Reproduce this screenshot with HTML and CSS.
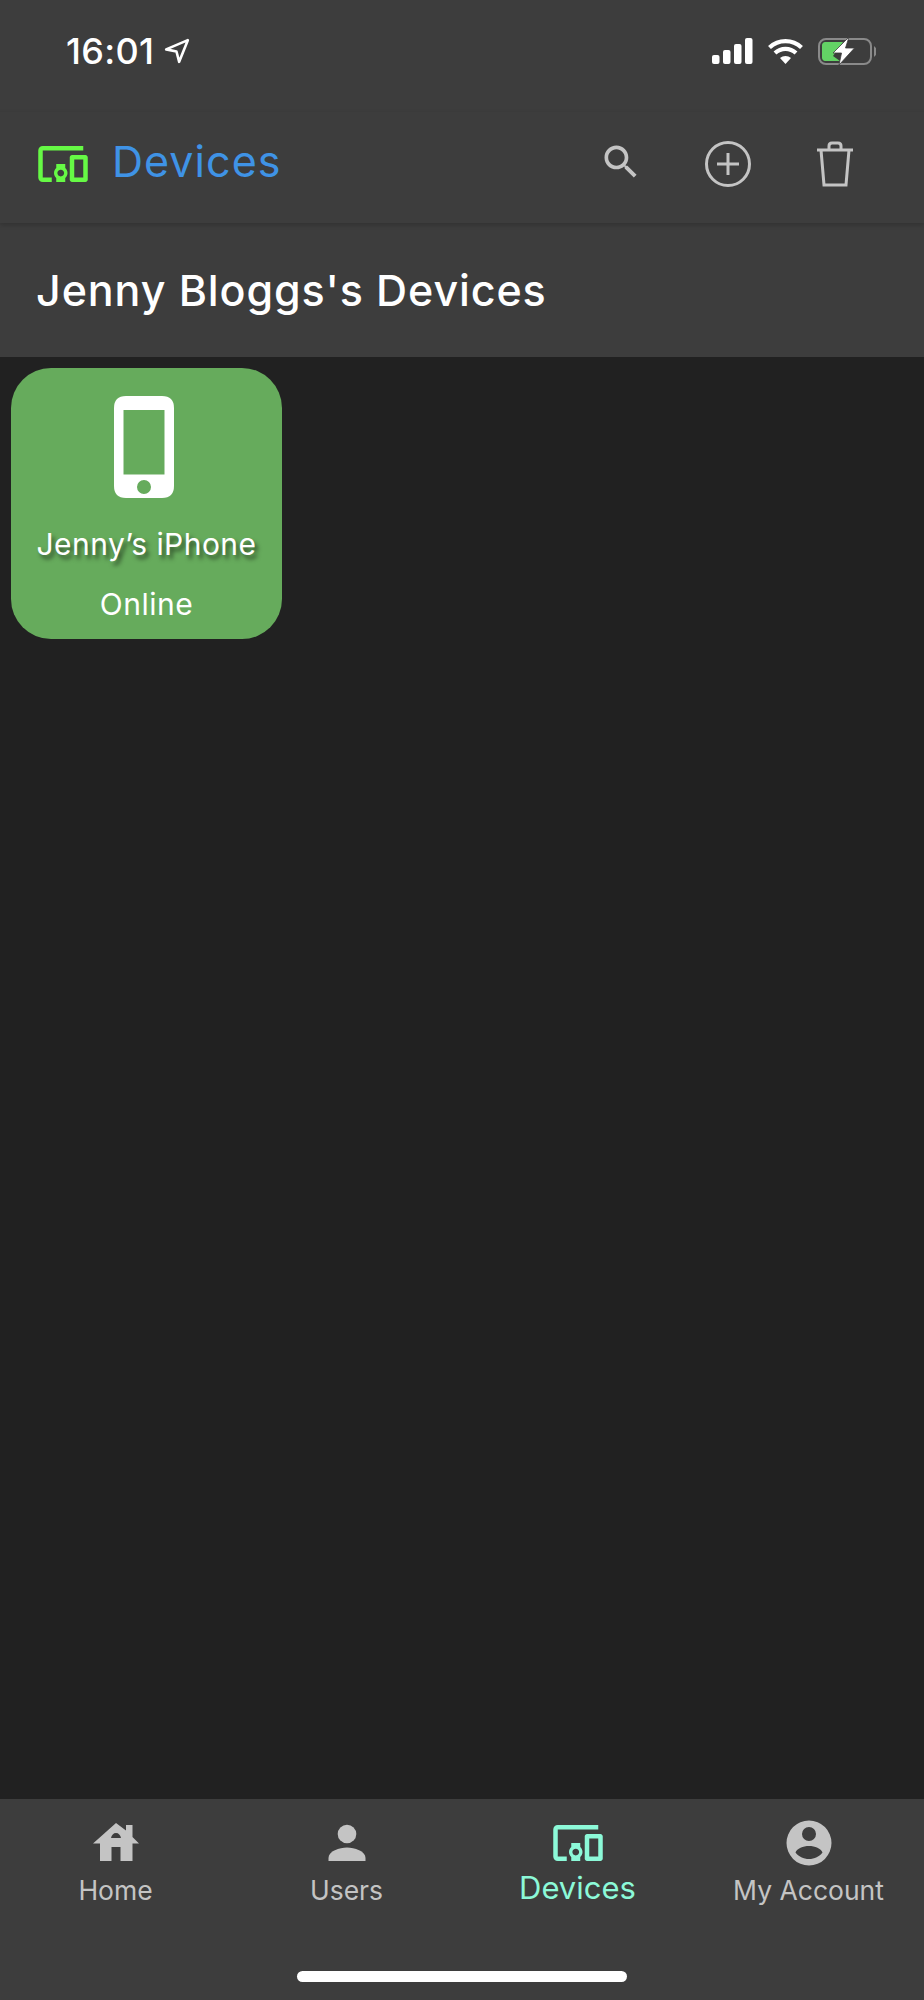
FILE: index.html
```html
<!DOCTYPE html>
<html lang="en">
<head>
    <meta charset="UTF-8">
    <meta name="viewport" content="width=device-width, initial-scale=1.0">
    <title>Devices</title>
    <link rel="stylesheet" href="styles.css">
</head>
<body>
    <div class="app">
        <div class="status-bar">
            <div class="status-left">
                <span class="time">16:01</span>
                <svg class="location" viewBox="0 0 24 24"><path d="M22 2 2 10.5l9.5 2 2.5 9.5z" fill="none" stroke="#fff" stroke-width="2.4" stroke-linejoin="round"/></svg>
            </div>
            <div class="status-right">
                <svg class="signal" viewBox="0 0 41 26" fill="#fff">
                    <rect x="0" y="17" width="7.5" height="9" rx="2"/>
                    <rect x="11" y="12" width="7.5" height="14" rx="2"/>
                    <rect x="22" y="6" width="7.5" height="20" rx="2"/>
                    <rect x="33" y="0" width="7.5" height="26" rx="2"/>
                </svg>
                <svg class="wifi" viewBox="0 0 36 26">
                    <path d="M2 9.5C11 1 25 1 34 9.5M7.5 15c6-5.5 15-5.5 21 0" fill="none" stroke="#fff" stroke-width="4.2"/>
                    <path d="M12.5 20c3-2.8 8-2.8 11 0L18 26z" fill="#fff"/>
                </svg>
                <svg class="battery" viewBox="0 0 58 28">
                    <rect x="1" y="2" width="52" height="25" rx="7" fill="none" stroke="#8a8a8a" stroke-width="2"/>
                    <path d="M57 11.5c1 1 1 5 0 6z" fill="#8a8a8a" stroke="#8a8a8a" stroke-width="2"/>
                    <path d="M7 5h18L15 19l7 5H7c-1.500 0-3-1.500-3-3V8c0-1.500 1.500-3 3-3z" fill="#63d265"/>
                    <path d="M31 0 15 16h8.5L21 28l15.5-17h-9z" fill="#fff" stroke="#3d3d3d" stroke-width="0.8"/>
                </svg>
            </div>
        </div>

        <header class="app-bar">
            <div class="app-title">
                <svg class="devices-icon green" viewBox="0 0 24 24"><path d="M3 6h18V4H3c-1.100 0-2 .9-2 2v12c0 1.100.9 2 2 2h4v-2H3V6zm10 6H9v1.780c-.61.55-1 1.330-1 2.220s.39 1.670 1 2.220V20h4v-1.780c.61-.55 1-1.340 1-2.220s-.39-1.670-1-2.220V12zm-2 5.500c-.83 0-1.500-.67-1.500-1.500s.67-1.500 1.500-1.500 1.500.67 1.500 1.500-.67 1.500-1.500 1.500zM22 8h-6c-.5 0-1 .5-1 1v10c0 .5.5 1 1 1h6c.5 0 1-.5 1-1V9c0-.5-.5-1-1-1zm-1 10h-4v-8h4v8z"/></svg>
                <span class="app-title-text">Devices</span>
            </div>
            <div class="app-actions">
                <svg class="search-icon" viewBox="0 0 24 24"><path d="M15.500 14h-.79l-.28-.27C15.410 12.590 16 11.110 16 9.500 16 5.910 13.090 3 9.500 3S3 5.910 3 9.500 5.910 16 9.500 16c1.610 0 3.090-.59 4.230-1.570l.27.28v.79l5 4.990L20.490 19l-4.990-5zm-6 0C7.010 14 5 11.990 5 9.500S7.010 5 9.500 5 14 7.010 14 9.500 11.990 14 9.500 14z"/></svg>
                <svg class="add-icon" viewBox="0 0 46 46"><circle cx="23" cy="23" r="21.5"/><path d="M12 23h22M23 12v22"/></svg>
                <svg class="trash-icon" viewBox="0 0 38 46"><path d="M1 9h36M5 9l3 35h22l3-35M13 9V5q0-3 3-3h6q3 0 3 3v4"/></svg>
            </div>
        </header>

        <div class="page-heading">Jenny Bloggs's Devices</div>

        <main class="content">
            <div class="device-card">
                <svg class="phone-icon" viewBox="0 0 60 102"><path fill-rule="evenodd" d="M12 0h36q12 0 12 12v78q0 12-12 12H12Q0 102 0 90V12Q0 0 12 0zM9.500 14v64.500h41V14zM30 84a7 7 0 1 0 0 14 7 7 0 0 0 0-14z"/></svg>
                <div class="device-name">Jenny’s iPhone</div>
                <div class="device-status">Online</div>
            </div>
        </main>

        <nav class="bottom-nav">
            <div class="nav-item">
                <svg class="nav-icon" viewBox="0 0 46 46"><path fill-rule="evenodd" d="M23 3 33 10.500V5h6.500v12L46 23.500h-6.500V41H27.500V27h-9v14H7V23.500H0zM23 13c-2.500 0-4.500 2-5 5h10c-.5-3-2.500-5-5-5z"/></svg>
                <span>Home</span>
            </div>
            <div class="nav-item">
                <svg class="nav-icon" viewBox="0 0 46 46"><circle cx="23" cy="14" r="9.3"/><path d="M4.500 41v-3c0-7 11-10.500 18.500-10.500S41.500 31 41.500 38v3z"/></svg>
                <span>Users</span>
            </div>
            <div class="nav-item active">
                <svg class="devices-icon" viewBox="0 0 24 24"><path d="M3 6h18V4H3c-1.100 0-2 .9-2 2v12c0 1.100.9 2 2 2h4v-2H3V6zm10 6H9v1.780c-.61.55-1 1.330-1 2.220s.39 1.670 1 2.220V20h4v-1.780c.61-.55 1-1.340 1-2.220s-.39-1.670-1-2.220V12zm-2 5.500c-.83 0-1.500-.67-1.500-1.500s.67-1.500 1.500-1.500 1.500.67 1.500 1.500-.67 1.500-1.500 1.500zM22 8h-6c-.5 0-1 .5-1 1v10c0 .5.5 1 1 1h6c.5 0 1-.5 1-1V9c0-.5-.5-1-1-1zm-1 10h-4v-8h4v8z"/></svg>
                <span>Devices</span>
            </div>
            <div class="nav-item">
                <svg class="nav-icon" viewBox="0 0 46 46"><path fill-rule="evenodd" d="M23 .5a22.500 22.500 0 1 1 0 45 22.500 22.500 0 0 1 0-45zM23 7a7 7 0 1 0 0 14 7 7 0 0 0 0-14zM23 26c-6 0-12 2.500-13.500 6.500C12.500 36.500 17.500 39 23 39s10.500-2.500 13.500-6.500C35 28.500 29 26 23 26z"/></svg>
                <span>My Account</span>
            </div>
        </nav>
        <div class="nav-footer">
            <div class="home-indicator"></div>
        </div>
    </div>
</body>
</html>
```

FILE: styles.css
```css
body {
    margin: 0;
    padding: 0;
    background: #212121;
    font-family: Inter, "Noto Sans", sans-serif;
}
svg {
    display: block;
}
.app {
    width: 924px;
    height: 2000px;
    display: flex;
    flex-direction: column;
    color: #fff;
}
.status-bar {
    height: 112px;
    flex: none;
    background: #3d3d3d;
    display: flex;
    justify-content: space-between;
    align-items: flex-start;
    box-sizing: border-box;
    padding: 37px 48px 0 66px;
}
.status-left {
    display: flex;
    align-items: center;
    gap: 10px;
}
.time {
    font-size: 36px;
    line-height: 28px;
    font-weight: 500;
    letter-spacing: 0.3px;
}
.location {
    width: 26px;
    height: 26px;
}
.status-right {
    display: flex;
    align-items: center;
    gap: 14px;
}
.signal {
    width: 41px;
    height: 26px;
}
.wifi {
    width: 37px;
    height: 26px;
}
.battery {
    width: 58px;
    height: 28px;
}
.app-bar {
    height: 111px;
    flex: none;
    background: #3d3d3d;
    display: flex;
    justify-content: space-between;
    align-items: center;
    box-sizing: border-box;
    padding: 0 70px 8px 36px;
    box-shadow: 0 2px 5px rgba(0, 0, 0, 0.2);
    position: relative;
}
.app-title {
    display: flex;
    align-items: center;
    gap: 22px;
    color: #3f93e6;
    font-size: 43px;
    letter-spacing: 1.05px;
}
.app-title-text {
    margin-top: -5px;
}
.devices-icon {
    width: 54px;
    height: 54px;
}
.devices-icon.green {
    fill: #66f945;
}
.app-actions {
    display: flex;
    align-items: center;
}
.search-icon {
    width: 44px;
    height: 44px;
    fill: #c4c4c4;
    margin: -4px 62px 0 0;
}
.add-icon {
    width: 46px;
    height: 46px;
    fill: none;
    stroke: #c4c4c4;
    stroke-width: 3;
    margin-right: 65px;
}
.trash-icon {
    width: 38px;
    height: 46px;
    fill: none;
    stroke: #c4c4c4;
    stroke-width: 3;
}
.page-heading {
    height: 134px;
    flex: none;
    background: #3d3d3d;
    box-sizing: border-box;
    padding: 0 36px;
    display: flex;
    align-items: center;
    font-size: 43px;
    font-weight: 450;
    letter-spacing: 0.9px;
}
.content {
    flex: 1;
    padding: 11px;
}
.device-card {
    width: 271px;
    height: 271px;
    background: #66ab5c;
    border-radius: 40px;
    display: flex;
    flex-direction: column;
    align-items: center;
    box-sizing: border-box;
    padding-top: 28px;
}
.phone-icon {
    width: 60px;
    height: 102px;
    fill: #fff;
    margin-left: -5px;
}
.device-name {
    font-size: 30px;
    line-height: 36px;
    margin-top: 28px;
    letter-spacing: 0.45px;
    text-shadow: 3px 4px 4px rgba(0, 0, 0, 0.55);
}
.device-status {
    font-size: 30px;
    line-height: 36px;
    margin-top: 24px;
    letter-spacing: 0.5px;
}
.bottom-nav {
    height: 128px;
    flex: none;
    background: #3d3d3d;
    display: grid;
    grid-template-columns: repeat(4, 1fr);
    box-sizing: border-box;
    padding-top: 21px;
}
.nav-item {
    display: flex;
    flex-direction: column;
    align-items: center;
    color: #c4c4c4;
    font-size: 26.5px;
    line-height: 32px;
    gap: 8px;
}
.nav-icon {
    width: 46px;
    height: 46px;
    fill: #c4c4c4;
}
.nav-item.active {
    color: #8cf9d8;
    font-size: 31px;
    gap: 2px;
}
.nav-item.active .devices-icon {
    fill: #8cf9d8;
    margin-top: -4px;
}
.nav-footer {
    height: 73px;
    flex: none;
    background: #3d3d3d;
    display: flex;
    justify-content: center;
    box-sizing: border-box;
    padding-top: 44px;
}
.home-indicator {
    width: 330px;
    height: 11px;
    background: #fff;
    border-radius: 6px;
}
```
